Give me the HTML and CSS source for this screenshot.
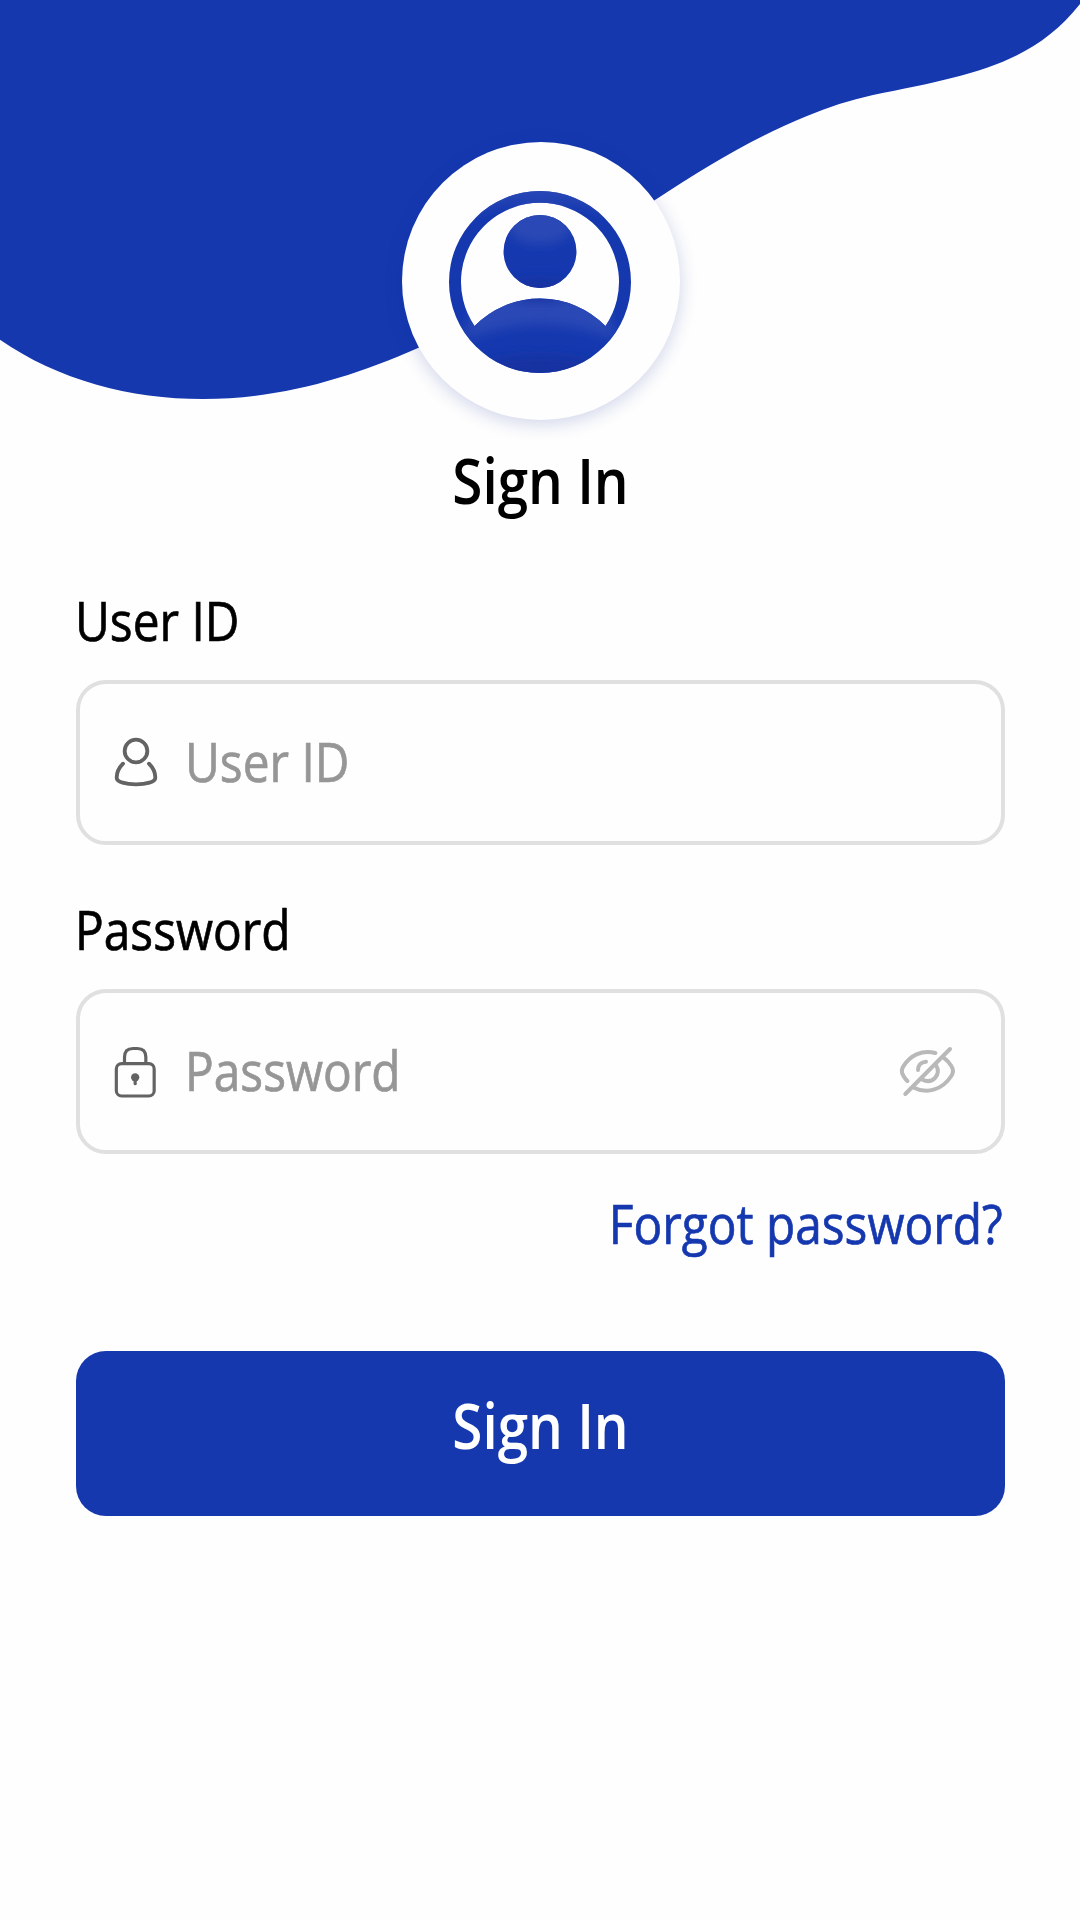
FILE: index.html
```html
<!DOCTYPE html>
<html lang="en">
<head>
<meta charset="utf-8">
<title>Sign In</title>
<link rel="stylesheet" href="styles.css">
</head>
<body>
<main class="screen">
  <svg class="wave" viewBox="0 0 1080 400" aria-hidden="true">
    <path d="M0 0H1080V4C1031 66 966 76 873 95C850 100 828 107 807 116C755 137 705 167 655 200C570 257 500 312 418 348C350 378 280 399 203 399C130 399 58 380 0 339.700Z"/>
  </svg>
  <div class="avatar">
    <svg class="avatar-icon" viewBox="449 191 182 182" aria-hidden="true">
      <defs>
        <clipPath id="figure">
          <path clip-rule="evenodd" d="M540 191a91 91 0 1 1 0 182a91 91 0 1 1 0-182ZM474.500 326A91.800 91.800 0 0 1 605.500 326A79 79 0 1 0 474.500 326Z"/>
          <circle cx="540" cy="251.500" r="36.500"/>
        </clipPath>
        <filter id="soft" x="-20%" y="-20%" width="140%" height="140%"><feGaussianBlur stdDeviation="6"/></filter>
      </defs>
      <g clip-path="url(#figure)">
        <rect class="base" x="449" y="191" width="182" height="182"/>
        <g filter="url(#soft)">
          <path class="light" d="M468 216Q540 178 612 216L600 180H480Z"/>
          <ellipse class="light" cx="540" cy="223" rx="34" ry="21"/>
          <path class="light" d="M462 340Q540 308 618 340L596 286H484Z"/>
          <ellipse class="dark" cx="540" cy="290" rx="34" ry="12"/>
          <ellipse class="dark" cx="540" cy="371" rx="62" ry="16"/>
        </g>
      </g>
    </svg>
  </div>
  <h1 class="title">Sign In</h1>
  <form class="form">
    <label class="label" for="user">User ID</label>
    <div class="field">
      <svg class="icon icon-user" viewBox="156 198 144 156" aria-hidden="true">
        <circle cx="228" cy="243" r="34"/>
        <path d="M189 281C176 294 170 308 170 323C170 336 198 343 228 343C258 343 286 336 286 323C286 308 280 294 267 281"/>
      </svg>
      <input class="input" id="user" type="text" placeholder="User ID">
    </div>
    <label class="label" for="pass">Password</label>
    <div class="field">
      <svg class="icon icon-lock" viewBox="156 464 144 162" aria-hidden="true">
        <path d="M193.500 519V501C193.500 483 202 474.500 219 474.500H232C249 474.500 257.500 483 257.500 501V519"/>
        <rect x="169" y="520" width="113.500" height="97" rx="16"/>
        <circle class="keyhole" cx="225.500" cy="561" r="12.500"/>
        <path d="M225.500 565V580"/>
      </svg>
      <input class="input" id="pass" type="password" placeholder="Password">
      <svg class="icon icon-eye" viewBox="114 195 177 159" aria-hidden="true">
        <path d="M136 342L270 207"/>
        <path d="M226 219C187 208 151 226 130 259Q121 273 130 287Q135 296 142 303"/>
        <path d="M250 232Q265 243 274 258Q284 273 274 288C248 328 202 344 162 323"/>
        <path d="M174 270C174 256 183 246 198 245"/>
        <path d="M229 257C243 283 219 314 187 299"/>
      </svg>
    </div>
    <a class="forgot" href="#">Forgot password?</a>
    <button class="submit" type="button"><span class="submit-text">Sign In</span></button>
  </form>
</main>
</body>
</html>
```
FILE: styles.css
```css
* {
  box-sizing: border-box;
}

body {
  margin: 0;
  background: #fefefe;
  font-family: "Open Sans", "Noto Sans", sans-serif;
  color: #000;
}

.screen {
  position: relative;
  display: flex;
  flex-direction: column;
  width: 1080px;
  height: 1920px;
  padding: 142px 75px 0 76px;
  overflow: hidden;
}

.wave {
  position: absolute;
  top: 0;
  left: 0;
  width: 1080px;
  height: 400px;
  fill: #1538af;
}

.avatar {
  position: relative;
  display: flex;
  justify-content: center;
  align-self: center;
  width: 278px;
  height: 278px;
  padding: 49px 2px 0 0;
  border-radius: 50%;
  background: #fefefe;
  box-shadow: 0 4px 18px rgba(20, 45, 150, 0.2);
}

.avatar-icon {
  width: 182px;
  height: 182px;
}

.base {
  fill: #1538af;
}

.light {
  fill: #2b4ab6;
}

.dark {
  fill: #1533a0;
}

/* Narrowed letterforms shared by all text */
.title,
.submit-text {
  font-size: 62.5px;
  font-weight: 600;
  transform: scaleX(0.877);
}

.label,
.input,
.forgot {
  font-size: 54.6px;
  transform: scaleX(0.876);
  transform-origin: left center;
  -webkit-text-stroke: 0.7px;
}

.title {
  margin: 20px 0 0;
  line-height: 80px;
  text-align: center;
}

.form {
  display: flex;
  flex-direction: column;
  margin-top: 64px;
}

.label {
  height: 96px;
  margin-left: -1.5px;
  line-height: 72px;
}

.field {
  display: flex;
  align-items: center;
  height: 165px;
  margin-bottom: 48px;
  padding: 0 44px 0 32px;
  border: 4px solid #e0e0e0;
  border-radius: 30px;
}

.icon {
  flex: none;
  fill: none;
  stroke: #636363;
  stroke-width: 11.5;
  stroke-linecap: round;
  stroke-linejoin: round;
}

.icon-user {
  width: 48px;
  height: 52px;
  margin-bottom: 2px;
}

.icon-lock {
  width: 48px;
  height: 54px;
  stroke-width: 9.5;
}

.keyhole {
  fill: #636363;
  stroke: none;
}

.icon-eye {
  width: 59px;
  height: 53px;
  stroke: #b9b9b9;
  stroke-width: 12;
}

.input {
  flex: 1;
  min-width: 0;
  height: 80px;
  margin: 0 0 4px 24.5px;
  padding: 0;
  border: 0;
  outline: 0;
  background: transparent;
  font-family: inherit;
}

.input::placeholder {
  color: #969696;
  opacity: 1;
}

.forgot {
  align-self: flex-end;
  margin: -15px 2px 0 0;
  line-height: 72px;
  color: #1538af;
  text-decoration: none;
  transform-origin: right center;
}

.submit {
  height: 165px;
  margin-top: 92px;
  padding: 0 0 18px;
  border: 0;
  border-radius: 30px;
  background: #1538af;
  color: #fff;
  font-family: inherit;
}

.submit-text {
  display: block;
}
```
